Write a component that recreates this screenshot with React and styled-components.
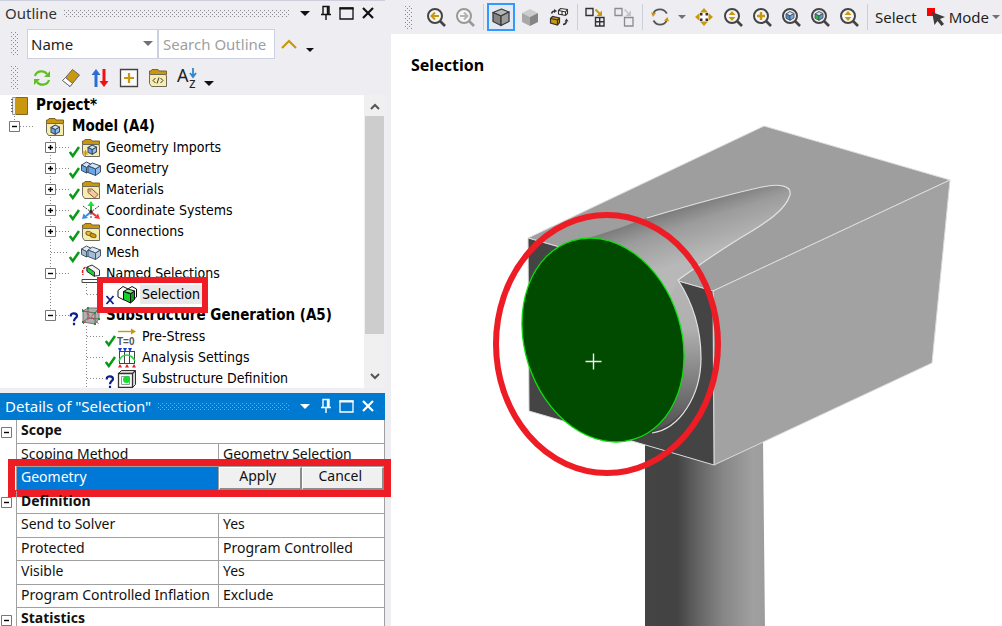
import React from "react";
import styled, { createGlobalStyle, css } from "styled-components";

const sans = `"Noto Sans", "Open Sans", sans-serif`;
const treeFont = `"DejaVu Sans Condensed", "Noto Sans", sans-serif`;
const red = "#ee1c24";

const dots = color => css`
  background-image: conic-gradient(
      from 270deg at 1px 1px,
      ${color} 90deg,
      transparent 0
    ),
    conic-gradient(from 270deg at 1px 1px, ${color} 90deg, transparent 0);
  background-position: 0 0, 2px 2px;
  background-size: 4px 4px;
`;

const GlobalStyle = createGlobalStyle`
  * {
    box-sizing: border-box;
  }
  body {
    margin: 0;
    background-color: #eeeef2;
    color: #1e1e1e;
    font-family: ${sans};
    font-size: 15px;
  }
  button, input, select {
    font: inherit;
    color: inherit;
  }
`;

const Workbench = styled.div`
  display: flex;
  gap: 6px;
  height: 100vh;
  overflow: hidden;
`;

const Sidebar = styled.div`
  position: relative;
  z-index: 1;
  flex: none;
  width: 385px;
  display: flex;
  flex-direction: column;
`;

const TitleBar = styled.header`
  display: flex;
  align-items: center;
  flex: none;
  height: 27px;
  padding: 0 7px 2px 5px;
  color: ${props => (props.$active ? "#fff" : "#333")};
  background-color: ${props => (props.$active ? "#0079d1" : "#eeeef2")};
  border-top: 1px solid ${props => (props.$active ? "#0079d1" : "#ccceDB")};
`;

const Title = styled.h2`
  margin: 0;
  font-size: 15px;
  font-weight: 400;
  line-height: 24px;
`;

const TitleDots = styled.span`
  flex: 1;
  height: 7px;
  margin: 0 4px 0 7px;
  ${props => dots(props.$active ? "#62afe6" : "#8a8a8e")}
`;

const WindowButton = styled.button`
  display: flex;
  align-items: center;
  justify-content: center;
  width: 21px;
  height: 22px;
  padding: 0;
  border: 0;
  background: none;
  color: ${props => (props.$active ? "#fff" : "#111")};
`;

const Bar = styled.div`
  display: flex;
  align-items: center;
  flex: none;
  height: ${props => props.$height}px;
  gap: ${props => props.$gap || 0}px;
  padding-left: 11px;
`;

const Grip = styled.span`
  flex: none;
  width: 7px;
  height: 23px;
  margin-right: 9px;
  ${dots("#8a8a8e")}
`;

const SelectBox = styled.div`
  position: relative;
  width: 131px;
`;

const Field = css`
  width: 100%;
  height: 30px;
  border: 1px solid #ccd0e0;
  border-radius: 0;
  background-color: #fff;
  outline: none;
`;

const NameSelect = styled.select`
  ${Field}
  appearance: none;
  padding: 0 3px;
`;

const SelectCaret = styled.span`
  position: absolute;
  right: 5px;
  top: 0;
  height: 30px;
  display: flex;
  align-items: center;
  pointer-events: none;
  color: #717171;
`;

const SearchBox = styled.input`
  ${Field}
  width: 117px;
  padding: 0 4px;
  &::placeholder {
    color: #a0a0a0;
    opacity: 1;
  }
`;

const ToolButton = styled.button`
  display: flex;
  align-items: center;
  justify-content: center;
  flex: none;
  width: 28px;
  height: 28px;
  padding: 0;
  border: ${props => (props.$pressed ? "2px solid #3399ff" : "0")};
  background-color: ${props => (props.$pressed ? "#e4eaf5" : "transparent")};
`;

const MoreButton = styled(ToolButton)`
  width: 14px;
  padding-top: ${props => (props.$low ? 12 : 0)}px;
  color: ${props => (props.$low ? "#111" : "#717171")};
`;

// outline tree

const TreePane = styled.div`
  display: flex;
  flex: none;
  height: 293px;
  margin-bottom: 5px;
  background-color: #fff;
`;

const TreeList = styled.ul`
  flex: 1;
  margin: 0;
  padding: 0 0 0 9px;
  list-style: none;
  overflow: hidden;
  font-family: ${treeFont};
  font-size: 14px;
  color: #000;
`;

const TreeRow = styled.li`
  position: relative;
  z-index: ${props => (props.$marked ? 1 : 0)};
  display: flex;
  align-items: center;
  height: 21px;
  white-space: nowrap;
`;

const Indent = styled.span`
  width: 36px;
  height: 21px;
  flex: none;
  background: ${props =>
    props.$line
      ? "repeating-linear-gradient(#888 0 1px, transparent 1px 3px) 5px 0 / 1px 100% no-repeat"
      : "none"};
`;

const Joint = styled.span`
  display: flex;
  align-items: center;
  flex: none;
  width: 11px;
  height: 21px;
  background: repeating-linear-gradient(#888 0 1px, transparent 1px 3px) 5px 0 /
    1px ${props => (props.$last ? "10px" : "100%")} no-repeat;
`;

const Expander = styled.button`
  display: flex;
  flex: none;
  width: 11px;
  height: 11px;
  padding: 0;
  border: 0;
  background-color: #fff;
`;

const Dash = styled.span`
  flex: none;
  width: ${props => (props.$leaf ? 18 : 13)}px;
  height: 1px;
  margin-left: ${props => (props.$leaf ? -5 : 0)}px;
  background: repeating-linear-gradient(
    90deg,
    #888 0 1px,
    transparent 1px 3px
  );
`;

const Status = styled.span`
  display: flex;
  align-items: flex-end;
  flex: none;
  width: 12px;
  height: 21px;
`;

const NodeIcon = styled.span`
  display: flex;
  flex: none;
  width: 20px;
  height: 20px;
  margin-right: ${props => (props.$top ? 5 : 3)}px;
`;

const Label = styled.span`
  padding: 0 2px;
  line-height: 19px;
  font-size: ${props => (props.$bold ? 15 : 14)}px;
  font-weight: ${props => (props.$bold ? 700 : 400)};
  background-color: ${props => (props.$selected ? "#e9e9e9" : "transparent")};
`;

const NodeMark = styled.span`
  position: absolute;
  left: 88px;
  top: -7px;
  width: 111px;
  height: 36px;
  border: 6px solid ${red};
  pointer-events: none;
`;

const ScrollTrack = styled.div`
  display: flex;
  flex-direction: column;
  align-items: center;
  width: 21px;
  padding: 8px 0;
  color: #555;
  background-color: #f0f0f0;
`;

const ScrollThumb = styled.div`
  width: 19px;
  height: 218px;
  margin: 6px 0 auto;
  background-color: #cdcdcd;
`;

// details grid

const DetailsPane = styled.div`
  flex: 1;
  background-color: #fff;
`;

const DetailsTable = styled.table`
  width: 100%;
  table-layout: fixed;
  border-collapse: separate;
  border-spacing: 0;
  border-right: 1px solid #a0a0a0;
  font-size: 14px;
  line-height: 18px;
  color: #111;
`;

const GutterCol = styled.col`
  width: 16px;
`;

const NameCol = styled.col`
  width: 202px;
`;

const DetailsRow = styled.tr`
  position: relative;
  height: 24px;
  &:nth-child(even) {
    height: 23px;
  }
`;

const Gutter = styled.td`
  padding: 0 0 0 1px;
  vertical-align: middle;
`;

const Cell = styled.td`
  padding: 0 0 3px 4px;
  border-left: 1px solid #a0a0a0;
  border-bottom: 1px solid #a0a0a0;
  text-align: left;
  font-weight: 400;
  white-space: nowrap;
  color: ${props => (props.$active ? "#fff" : "inherit")};
  background-color: ${props => (props.$active ? "#0078d7" : "transparent")};
`;

const GroupCell = styled(Cell)`
  font-weight: 700;
`;

const ButtonCell = styled(Cell)`
  padding: 0;
`;

const ButtonPair = styled.div`
  display: flex;
  height: 23px;
`;

const PushButton = styled.button`
  flex: 1;
  padding: 0 4px 4px 0;
  border: 1px solid #fff;
  border-right: 2px solid #8c8c8c;
  border-bottom: 2px solid #8c8c8c;
  line-height: 16px;
  background-color: #f0f0f0;
`;

const RowMark = styled.span`
  position: absolute;
  left: 8px;
  top: -8px;
  width: 383px;
  height: 38px;
  border: 7px solid ${red};
  pointer-events: none;
`;

// graphics window

const Graphics = styled.main`
  flex: 1;
  min-width: 0;
  display: flex;
  flex-direction: column;
  background-color: #fff;
`;

const GraphicsBar = styled.div`
  display: flex;
  align-items: center;
  gap: 1px;
  flex: none;
  height: 34px;
  padding-left: 14px;
  overflow: hidden;
  background-color: #eeeef2;
`;

const Divider = styled.span`
  flex: none;
  width: 1px;
  height: 26px;
  margin: 0 2px 0 3px;
  background-color: #ccceDB;
`;

const TextButton = styled.button`
  display: flex;
  align-items: center;
  flex: none;
  gap: 3px;
  padding: 0 4px;
  border: 0;
  background: none;
`;

const ViewTitle = styled.h1`
  margin: 0;
  padding: 20px 20px 22px;
  font-size: 16px;
  line-height: 22px;
  color: #000;
`;

const Scene = styled.svg`
  flex: 1;
  min-height: 0;
  width: 100%;
`;

// small glyphs

const Caret = () => (
  <svg width="10" height="5" viewBox="0 0 10 5">
    <path d="M0 0h10L5 5z" fill="currentColor" />
  </svg>
);

const SmallCaret = ({ color = "currentColor" }) => (
  <svg width="8" height="4" viewBox="0 0 8 4">
    <path d="M0 0h8L4 4z" fill={color} />
  </svg>
);

const Pin = () => (
  <svg width="12" height="16" viewBox="0 0 12 16" fill="none" stroke="currentColor">
    <path d="M3 9V1.5h6V9M1 9.5h10M6 10v5" strokeWidth="1.4" />
    <path d="M7.8 2v7" strokeWidth="2" />
  </svg>
);

const Maximize = () => (
  <svg width="15" height="13" viewBox="0 0 15 13" fill="none" stroke="currentColor">
    <path d="M1 1v11h13V1z" strokeWidth="1.3" />
    <path d="M.5 1.5h14" strokeWidth="2" />
  </svg>
);

const Close = () => (
  <svg width="12" height="12" viewBox="0 0 12 12" stroke="currentColor" strokeWidth="2.2">
    <path d="M1 1l10 10M11 1L1 11" />
  </svg>
);

const Box = ({ open }) => (
  <svg width="11" height="11" viewBox="0 0 11 11" fill="#fff" stroke="#777">
    <path d="M.5.5h10v10H.5z" />
    <path d={open ? "M3 5.5h5" : "M3 5.5h5M5.5 3v5"} stroke="#000" strokeWidth="1.4" />
  </svg>
);

const Chevron = ({ down }) => (
  <svg width="10" height="7" viewBox="0 0 10 7" fill="none" stroke="currentColor" strokeWidth="2">
    <path d={down ? "M1 1l4 4 4-4" : "M1 6l4-4 4 4"} />
  </svg>
);

const statusGlyphs = {
  check: (
    <svg width="12" height="14" viewBox="0 0 12 14" fill="none">
      <path d="M.8 8l3 4L10 3" stroke="#0a9a17" strokeWidth="2.5" />
    </svg>
  ),
  cross: (
    <svg width="12" height="14" viewBox="0 0 12 14" fill="none">
      <path d="M1.5 5l7 8M8.5 5l-7 8" stroke="#0b1f8c" strokeWidth="1.8" />
    </svg>
  ),
  question: (
    <svg width="12" height="16" viewBox="0 0 12 16" fill="none">
      <path
        d="M1.800 6.500V5.500C1.800 2.500 8 2.500 8 6c0 2-3 2-3 5.200M5 12.800v2.400"
        stroke="#0b1f8c"
        strokeWidth="2.200"
      />
    </svg>
  )
};

// tree icons

const Folder = ({ children }) => (
  <svg width="20" height="20" viewBox="0 0 20 20">
    <path d="M1.5 6.5V3H3l1-1.500h6L11 3h7.500v3.500z" fill="#c9980f" stroke="#7a6426" />
    <path d="M1.500 6.500h15.500l1.500 1v11H3.500l-2-3z" fill="#f7edae" stroke="#6d6a5c" />
    {children}
  </svg>
);

const Cube = ({ x, y, s, top, left, right, stroke }) => (
  <g transform={`translate(${x} ${y}) scale(${s})`} stroke={stroke} strokeWidth={1 / s} strokeLinejoin="round">
    <path d="M0 3l5-3 5 2.500-5 3z" fill={top} />
    <path d="M0 3l5 2.500V11L0 8.500z" fill={left} />
    <path d="M5 5.500l5-3V8l-5 3z" fill={right} />
  </g>
);

const blue = { top: "#cfe4f9", left: "#6aa5e6", right: "#8dbdf0", stroke: "#3c4c63" };
const pale = { top: "#dfeaf5", left: "#9fbcdc", right: "#b4cce6", stroke: "#4b5560" };

const Blocks = ({ tone }) => (
  <svg width="20" height="20" viewBox="0 0 20 20">
    <Cube x={0.5} y={3} s={1} {...tone} />
    <path d="M7 7l4.500-3 8 3-5 3z" fill={tone.top} stroke={tone.stroke} />
    <path d="M7 7l7.500 3v6.500L7 13.500z" fill={tone.left} stroke={tone.stroke} />
    <path d="M14.500 10l5-3v6l-5 3.500z" fill={tone.right} stroke={tone.stroke} />
  </svg>
);

const nodeIcons = {
  project: (
    <svg width="20" height="20" viewBox="0 0 20 20">
      <path d="M6.500 1.500h12v17h-12z" fill="#c9980f" stroke="#7d6628" />
      <path d="M3.500 1.500h3v17h-3z" fill="#eee" stroke="#999" />
      <path d="M2 3.500h2M2 6.500h2M2 9.500h2M2 12.500h2M2 15.500h2" stroke="#666" />
    </svg>
  ),
  model: (
    <Folder>
      <Cube x={6} y={8} s={0.85} {...blue} />
    </Folder>
  ),
  imports: (
    <Folder>
      <Cube x={7} y={7} s={0.85} {...blue} />
      <path d="M4.500 12v6M1.500 15h6M2.500 13l4 4M6.500 13l-4 4" stroke="#c9980f" />
    </Folder>
  ),
  geometry: <Blocks tone={blue} />,
  materials: (
    <Folder>
      <path d="M7 9h4l6 5.500-3.500 3.500L7 12.500z" fill="#f6c9a2" stroke="#8b5d3c" />
      <circle cx="9" cy="11" r="0.8" fill="#8b5d3c" />
    </Folder>
  ),
  axes: (
    <svg width="20" height="20" viewBox="0 0 20 20">
      <path d="M10 11V5" stroke="#16c416" strokeWidth="2" />
      <path d="M10 0l3.500 5h-7z" fill="#16e03a" />
      <path d="M10 11l-5 4" stroke="#3d8be0" strokeWidth="2" />
      <path d="M1 18l1.500-5.500L7 17z" fill="#3d8be0" />
      <path d="M10 11l5 4" stroke="#e33" strokeWidth="2" />
      <path d="M19 18l-6-1 4-4.500z" fill="#f33" />
      <path d="M2 5l6 4.500M18 5l-6 4.500M10 12v6" stroke="#444" strokeDasharray="2 1" />
      <circle cx="10" cy="10.500" r="1.8" fill="#333" />
    </svg>
  ),
  connections: (
    <Folder>
      <ellipse cx="8" cy="11.500" rx="3.2" ry="2" fill="#e5b93a" stroke="#7a6426" transform="rotate(20 8 11.500)" />
      <ellipse cx="12" cy="13.500" rx="3.2" ry="2" fill="#c9980f" stroke="#7a6426" transform="rotate(20 12 13.500)" />
    </Folder>
  ),
  mesh: <Blocks tone={pale} />,
  named: (
    <svg width="20" height="20" viewBox="0 0 20 20">
      <path d="M6 3l5-2 7.500 5v5.500l-5 .5L6 7z" fill="#f4f4f4" stroke="#333" />
      <path d="M6 3l7.500 5v4.500L6 7.500z" fill="#16d12e" stroke="#333" />
      <path d="M4.500 3C1.500 5 1 8 2 11" fill="none" stroke="#e02020" strokeWidth="1.500" strokeDasharray="3 1" />
      <path d="M1 15.500h16v3H1z" fill="#fff" stroke="#444" />
      <path d="M17.500 15.500l2-2" fill="none" stroke="#c9980f" />
    </svg>
  ),
  selection: (
    <svg width="20" height="20" viewBox="0 0 20 20" strokeLinejoin="round" stroke="#111">
      <path d="M1 5.500l5-4 5 2.500v8l-4 3-6-3z" fill="#fff" />
      <path d="M11 4l4-2.500 4.500 2.500v8L14 16.500" fill="#fff" />
      <path d="M6.500 6.500L11 4l6.500 2-3.500 2.500z" fill="#7df28a" />
      <path d="M6.500 6.500L13.500 9v9l-7-3.500z" fill="#12d22c" />
      <path d="M13.500 9l4-3v8.500l-4 3.500z" fill="#0c9d20" />
    </svg>
  ),
  substructure: (
    <svg width="20" height="20" viewBox="0 0 20 20">
      <path d="M2 5l5-3h11v11l-4 5-12-2z" fill="#b0b0b0" stroke="#777" />
      <path d="M2 5l12 2v11M14 7l4-5M7 2v10l11 1M7 12l-5 4" fill="none" stroke="#666" />
      <path d="M1 3l17 15M18 3L2 18" stroke="#d04040" strokeDasharray="4 2" />
      <path d="M1 4h2v2H1zM6 1h2v2H6zM17 1h2v2h-2zM13 6h2v2h-2zM1 15h2v2H1zM13 17h2v2h-2zM17 12h2v2h-2z" fill="#2a8a3a" />
    </svg>
  ),
  prestress: (
    <svg width="20" height="20" viewBox="0 0 20 20">
      <path d="M1 4.500h13" stroke="#c9980f" strokeWidth="1.400" />
      <path d="M14 1.500l5 3-5 3z" fill="#c9980f" />
      <text x="0" y="18" fontSize="10" fontWeight="700" fontFamily="Liberation Sans, sans-serif" fill="#555">
        T=0
      </text>
    </svg>
  ),
  analysis: (
    <svg width="20" height="20" viewBox="0 0 20 20" fill="none">
      <path d="M2.500 3v13M7.500 3v13M12.500 3v13M17.500 3v13M2 3.500h16M2 15.500h16" stroke="#444" />
      <path d="M2 13c3-8 12-8 16 0" stroke="#19dc3a" strokeWidth="1.600" />
      <path d="M1 0h4L3 4zM6 0h4L8 4zM11 0h4l-2 4z" fill="#1a35d8" />
      <path d="M1 19.500l2-3.500 2 3.500zM8 19.500l2-3.500 2 3.500zM15 19.500l2-3.500 2 3.500z" fill="#e02020" />
    </svg>
  ),
  definition: (
    <svg width="20" height="20" viewBox="0 0 20 20" fill="#fff" stroke="#333">
      <path d="M1.500 4.500l3-3h14v14l-3 3h-14z" fill="#ddd" />
      <path d="M1.500 4.500h14v14h-14zM15.500 4.500l3-3" strokeWidth="1.300" />
      <path d="M4.500 7.500h8v8h-8z" stroke="#999" />
      <circle cx="9.500" cy="10.500" r="3.5" fill="#12e02c" stroke="none" />
    </svg>
  )
};

const nodes = [
  { label: "Project*", icon: "project", level: 0, bold: true },
  { label: "Model (A4)", icon: "model", level: 1, open: true, bold: true, last: true },
  { label: "Geometry Imports", icon: "imports", level: 2, open: false, status: "check" },
  { label: "Geometry", icon: "geometry", level: 2, open: false, status: "check" },
  { label: "Materials", icon: "materials", level: 2, open: false, status: "check" },
  { label: "Coordinate Systems", icon: "axes", level: 2, open: false, status: "check" },
  { label: "Connections", icon: "connections", level: 2, open: false, status: "check" },
  { label: "Mesh", icon: "mesh", level: 2, status: "check" },
  { label: "Named Selections", icon: "named", level: 2, open: true },
  { label: "Selection", icon: "selection", level: 3, status: "cross", selected: true, line: true, last: true },
  { label: "Substructure Generation (A5)", icon: "substructure", level: 2, open: true, status: "question", bold: true, last: true },
  { label: "Pre-Stress", icon: "prestress", level: 3, status: "check" },
  { label: "Analysis Settings", icon: "analysis", level: 3, status: "check" },
  { label: "Substructure Definition", icon: "definition", level: 3, status: "question" }
];

const TreeNode = ({ node }) => {
  const leaf = node.open === undefined;
  return (
    <TreeRow $marked={node.selected}>
      {node.level > 1 && <Indent />}
      {node.level > 2 && <Indent $line={node.line} />}
      {node.level > 0 && (
        <>
          <Joint $last={node.last}>
            {!leaf && (
              <Expander aria-label={`Toggle ${node.label}`}>
                <Box open={node.open} />
              </Expander>
            )}
          </Joint>
          <Dash $leaf={leaf} />
          <Status>{statusGlyphs[node.status]}</Status>
        </>
      )}
      <NodeIcon $top={node.level < 2}>{nodeIcons[node.icon]}</NodeIcon>
      <Label $bold={node.bold} $selected={node.selected}>
        {node.label}
      </Label>
      {node.selected && <NodeMark />}
    </TreeRow>
  );
};

const TitleButtons = ({ active }) => (
  <>
    <WindowButton $active={active} aria-label="Menu">
      <Caret />
    </WindowButton>
    <WindowButton $active={active} aria-label="Pin">
      <Pin />
    </WindowButton>
    <WindowButton $active={active} aria-label="Maximize">
      <Maximize />
    </WindowButton>
    <WindowButton $active={active} aria-label="Close">
      <Close />
    </WindowButton>
  </>
);

// toolbar icons

const outlineTools = {
  Refresh: (
    <svg width="20" height="20" viewBox="0 0 20 20" fill="none" stroke="#5fbf22" strokeWidth="2.200">
      <path d="M3 8C4.500 2.500 12 2 15 6M17 12c-1.500 5.500-9 6-12 2" />
      <path d="M18 3v6h-6zM2 17v-6h6z" fill="#5fbf22" stroke="none" />
    </svg>
  ),
  Clear: (
    <svg width="20" height="20" viewBox="0 0 20 20" stroke="#666">
      <path d="M11.500 1.500l7 5.500L9 18.500l-7-6z" fill="#c9980f" />
      <path d="M4.500 9.500l7 6L9 18.500l-7.500-6z" fill="#fff" />
    </svg>
  ),
  Sort: (
    <svg width="20" height="20" viewBox="0 0 20 20">
      <path d="M6 19V5" stroke="#2a6fd0" strokeWidth="3" />
      <path d="M1.500 7L6 1l4.500 6z" fill="#2a6fd0" />
      <path d="M14 1v14" stroke="#f01010" strokeWidth="3" />
      <path d="M9.500 13l4.500 6 4.500-6z" fill="#f01010" />
    </svg>
  ),
  Expand: (
    <svg width="20" height="20" viewBox="0 0 20 20">
      <path d="M1.500 1.500h17v17h-17z" fill="#fbfbfb" stroke="#444" strokeWidth="1.300" />
      <path d="M10 5v10M5 10h10" stroke="#c9980f" strokeWidth="2.200" />
    </svg>
  ),
  Tags: (
    <Folder>
      <path d="M7.500 10L5 12.500 7.500 15M12.500 10l2.500 2.500-2.500 2.500M11 9.500l-2 6" fill="none" stroke="#333" />
    </Folder>
  ),
  Alphabetical: (
    <svg width="26" height="28" viewBox="0 0 26 28" fontFamily="Noto Sans, sans-serif" fill="#222">
      <text x="3" y="18" fontSize="18">
        A
      </text>
      <text x="15" y="24" fontSize="14">
        z
      </text>
      <path d="M19 4v8M16 9l3 4 3-4" stroke="#2f86cc" strokeWidth="1.800" fill="none" />
    </svg>
  )
};

const Lens = ({ color = "#444", children }) => (
  <svg width="20" height="20" viewBox="0 0 20 20">
    <circle cx="9" cy="9" r="7" fill="#f6f6f6" stroke={color} strokeWidth="2" />
    <path d="M14 14l5 5" stroke={color} strokeWidth="2.600" />
    {children}
  </svg>
);

const UpDown = () => <path d="M9 4l3.500 4h-7zM9 14l3.500-4h-7z" fill="#c9980f" />;

const viewTools = [
  {
    name: "Previous view",
    icon: (
      <Lens>
        <path d="M13 9H6M9 5.500L5.500 9 9 12.500" fill="none" stroke="#c9980f" strokeWidth="2" />
      </Lens>
    )
  },
  {
    name: "Next view",
    icon: (
      <Lens color="#999">
        <path d="M5 9h7M9 5.500l3.500 3.500L9 12.500" fill="none" stroke="#b4b4b4" strokeWidth="2" />
      </Lens>
    )
  },
  { divider: true },
  {
    name: "Shaded with edges",
    pressed: true,
    icon: (
      <svg width="20" height="20" viewBox="0 0 20 20">
        <g stroke="#3a3a3a" strokeWidth="1.300" strokeLinejoin="round">
          <path d="M2 5.500L10.500 2 18 5l-8 4z" fill="#b5b5b5" />
          <path d="M2 5.500L10 9v9.500l-8-4z" fill="#858585" />
          <path d="M18 5l-8 4v9.500l8-4z" fill="#9c9c9c" />
        </g>
      </svg>
    )
  },
  {
    name: "Shaded",
    icon: (
      <svg width="20" height="20" viewBox="0 0 20 20">
        <path d="M2 6l8-4 8 4-8 4z" fill="#ccc" />
        <path d="M2 6l8 4v9l-8-4z" fill="#a8a8a8" />
        <path d="M18 6l-8 4v9l8-4z" fill="#858585" />
      </svg>
    )
  },
  {
    name: "Swap bodies",
    icon: (
      <svg width="20" height="20" viewBox="0 0 20 20">
        <path d="M9.500 3.500l2-2 7 1v4l-2 2-7-1.500zM9.500 3.500l7 1.500v3.500M16.500 5l2-2.500M13 4.200v3.600" fill="#fff" stroke="#333" strokeWidth="1.100" />
        <path d="M1.500 11.500l2-2 7 1.500v4.500l-2 2.500-7-2zM1.500 11.500l7 1.500v5M8.500 13l2-2" fill="#c9980f" stroke="#333" strokeWidth="1.200" />
        <path d="M2.500 6.500C3 5 4 4 6 4M14 17.500c2 0 3-1 3.500-3" fill="none" stroke="#333" strokeWidth="1.500" />
        <path d="M5 2l3 2-3 2zM15.500 14.500h4l-2-3z" fill="#333" />
      </svg>
    )
  },
  { divider: true },
  {
    name: "Expand selection",
    icon: (
      <svg width="20" height="20" viewBox="0 0 20 20" fill="none" stroke="#333" strokeWidth="1.400">
        <path d="M1 1.500h7v7H1zM10.500 10.500h8.500v8.500h-8.500zM14.700 10.500V19M10.500 14.700H19" />
        <path d="M10.500 2.500l4 4" stroke="#c9980f" strokeWidth="2" />
        <path d="M17 3.500V9h-5.500z" fill="#c9980f" stroke="none" />
      </svg>
    )
  },
  {
    name: "Collapse selection",
    icon: (
      <svg width="20" height="20" viewBox="0 0 20 20" fill="none" stroke="#8c8c8c" strokeWidth="1.300">
        <path d="M1 1.500h7v7H1zM10.500 10.500h8.500v8.500h-8.500z" />
        <path d="M10.500 2.500l4 4" stroke="#c4c4c4" strokeWidth="1.600" />
        <path d="M17 3.500V9h-5.500z" fill="#c4c4c4" stroke="none" />
      </svg>
    )
  },
  { divider: true },
  {
    name: "Rotate",
    icon: (
      <svg width="20" height="20" viewBox="0 0 20 20" fill="none" stroke="#555" strokeWidth="1.800">
        <path d="M3.500 6C6 1 14 1 16.800 6.500M16.500 14c-3 5-10 5-13-.5" />
        <path d="M1 5.500l5 .5-3 4zM19 14.500l-5-1 3.500-3.500z" fill="#c9980f" stroke="none" />
      </svg>
    )
  },
  { name: "Rotate options", more: true },
  {
    name: "Pan",
    icon: (
      <svg width="20" height="20" viewBox="0 0 20 20">
        <path d="M10 1l4 4.500H6zM10 19l4-4.500H6zM1 10l4.500-4v8zM19 10l-4.500-4v8z" fill="#c9980f" />
        <path d="M6 6h8v8H6z" fill="#fff" />
        <path d="M6 6h2.500v2.500H6zM11.500 6H14v2.500h-2.500zM6 11.500h2.500V14H6zM11.500 11.500H14V14h-2.500z" fill="#333" />
      </svg>
    )
  },
  { name: "Zoom", icon: <Lens><UpDown /></Lens> },
  {
    name: "Zoom in",
    icon: (
      <Lens>
        <path d="M9 5v8M5 9h8" stroke="#c9980f" strokeWidth="2.400" />
      </Lens>
    )
  },
  {
    name: "Zoom to fit",
    icon: (
      <Lens>
        <Cube x={5} y={4.5} s={0.8} top="#d4e8fb" left="#5584bd" right="#7ba9dd" stroke="#4a5a70" />
      </Lens>
    )
  },
  {
    name: "Zoom to selection",
    icon: (
      <Lens>
        <Cube x={5} y={4.5} s={0.8} top="#c9dcf0" left="#14c630" right="#6c94bf" stroke="#4a5a60" />
      </Lens>
    )
  },
  { name: "Box zoom", icon: <Lens><UpDown /></Lens> },
  { divider: true }
];

const ModeIcon = () => (
  <svg width="20" height="20" viewBox="0 0 20 20">
    <path d="M1 1h8v8H1z" fill="#f00" />
    <path d="M6 5l13 5-5 2 4 5-2.500 2-4-5-3 4z" fill="#3d3d3d" />
  </svg>
);

const ViewTool = ({ tool }) => {
  if (tool.divider) {
    return <Divider />;
  }
  if (tool.more) {
    return (
      <MoreButton aria-label={tool.name}>
        <SmallCaret />
      </MoreButton>
    );
  }
  return (
    <ToolButton $pressed={tool.pressed} aria-label={tool.name}>
      {tool.icon}
    </ToolButton>
  );
};

const details = [
  { group: "Scope" },
  { name: "Scoping Method", value: "Geometry Selection" },
  { name: "Geometry", editing: true },
  { group: "Definition" },
  { name: "Send to Solver", value: "Yes" },
  { name: "Protected", value: "Program Controlled" },
  { name: "Visible", value: "Yes" },
  { name: "Program Controlled Inflation", value: "Exclude" },
  { group: "Statistics" }
];

const Detail = ({ row }) => {
  if (row.group) {
    return (
      <DetailsRow>
        <Gutter>
          <Expander aria-label={`Toggle ${row.group}`}>
            <Box open />
          </Expander>
        </Gutter>
        <GroupCell as="th" colSpan={2}>
          {row.group}
        </GroupCell>
      </DetailsRow>
    );
  }
  return (
    <DetailsRow>
      <Gutter>{row.editing && <RowMark />}</Gutter>
      <Cell as="th" scope="row" $active={row.editing}>
        {row.name}
      </Cell>
      {row.editing ? (
        <ButtonCell>
          <ButtonPair>
            <PushButton>Apply</PushButton>
            <PushButton>Cancel</PushButton>
          </ButtonPair>
        </ButtonCell>
      ) : (
        <Cell>{row.value}</Cell>
      )}
    </DetailsRow>
  );
};

const NacelleScene = () => (
  <Scene viewBox="391 98 611 528" preserveAspectRatio="xMinYMin slice">
    <defs>
      <linearGradient id="post">
        <stop offset="0" stopColor="#444" />
        <stop offset="0.27" stopColor="#434343" />
        <stop offset="0.42" stopColor="#606060" />
        <stop offset="0.65" stopColor="#868686" />
        <stop offset="0.9" stopColor="#a0a0a0" />
        <stop offset="1" stopColor="#9c9c9c" />
      </linearGradient>
      <linearGradient id="hub" gradientUnits="userSpaceOnUse" x1="690" y1="200" x2="708" y2="255">
        <stop offset="0" stopColor="#747474" />
        <stop offset="0.4" stopColor="#9c9c9c" />
        <stop offset="1" stopColor="#b8b8b8" />
      </linearGradient>
      <linearGradient id="rim" gradientUnits="userSpaceOnUse" x1="0" y1="270" x2="0" y2="435">
        <stop offset="0" stopColor="#b6b6b6" />
        <stop offset="0.35" stopColor="#b0b0b0" />
        <stop offset="1" stopColor="#4c4c4c" />
      </linearGradient>
    </defs>
    <path d="M645 440h118l2 190H645z" fill="url(#post)" />
    <g stroke="#dcdcdc" strokeLinejoin="round">
      <path d="M528 238L764 126l186 54-237 111z" fill="#9e9e9e" />
      <path d="M713 291l237-111-18 183-218 102z" fill="#a2a2a2" />
      <path d="M528 238l185 53 1 174-185-54z" fill="#444" />
    </g>
    <path
      d="M645 432C680 428 701 395 701 358c0-30-8-55-23-78L640 250 600 300v130z"
      fill="url(#rim)"
    />
    <path
      d="M585 239C610 232 630 224 647 218c40-12 83-24 115-31 18-4 30-1 28 8-5 16-25 28-43 39-22 13-48 31-69 46l-20 40-60-60z"
      fill="url(#hub)"
    />
    <path
      d="M647 218c40-12 83-24 115-31 18-4 30-1 28 8-5 16-25 28-43 39-22 13-48 31-69 46 15 23 23 48 23 78 0 37-21 71-49 75"
      fill="none"
      stroke="#e2e2e2"
      strokeWidth="1.2"
    />
    <ellipse cx="603" cy="340" rx="104" ry="78.4" transform="rotate(72.6 603 340)" fill="#004b00" stroke="#0be00b" strokeWidth="1.3" />
    <path d="M585.5 361.5h16M593.5 353.5v16" stroke="#eee" strokeWidth="1.4" />
    <ellipse cx="607" cy="344" rx="111" ry="129" fill="none" stroke={red} strokeWidth="6" />
  </Scene>
);

export default function App() {
  return (
    <Workbench>
      <GlobalStyle />
      <Sidebar>
        <TitleBar>
          <Title>Outline</Title>
          <TitleDots />
          <TitleButtons />
        </TitleBar>
        <Bar $height={33}>
          <Grip />
          <SelectBox>
            <NameSelect aria-label="Filter by" defaultValue="Name">
              <option>Name</option>
            </NameSelect>
            <SelectCaret>
              <Caret />
            </SelectCaret>
          </SelectBox>
          <SearchBox aria-label="Search Outline" placeholder="Search Outline" />
          <ToolButton aria-label="Collapse search">
            <svg width="16" height="10" viewBox="0 0 16 10" fill="none">
              <path d="M1 9l7-7 7 7" stroke="#c9980f" strokeWidth="2.2" />
            </svg>
          </ToolButton>
          <MoreButton $low aria-label="Search options">
            <SmallCaret />
          </MoreButton>
        </Bar>
        <Bar $height={35} $gap={1}>
          <Grip />
          {Object.keys(outlineTools).map(name => (
            <ToolButton key={name} aria-label={name}>
              {outlineTools[name]}
            </ToolButton>
          ))}
          <MoreButton $low aria-label="More tools">
            <Caret />
          </MoreButton>
        </Bar>
        <TreePane>
          <TreeList>
            {nodes.map(node => (
              <TreeNode key={node.label} node={node} />
            ))}
          </TreeList>
          <ScrollTrack>
            <Chevron />
            <ScrollThumb />
            <Chevron down />
          </ScrollTrack>
        </TreePane>
        <TitleBar $active>
          <Title>Details of "Selection"</Title>
          <TitleDots $active />
          <TitleButtons active />
        </TitleBar>
        <DetailsPane>
          <DetailsTable>
            <colgroup>
              <GutterCol />
              <NameCol />
              <col />
            </colgroup>
            <tbody>
              {details.map(row => (
                <Detail key={row.group || row.name} row={row} />
              ))}
            </tbody>
          </DetailsTable>
        </DetailsPane>
      </Sidebar>
      <Graphics>
        <GraphicsBar>
          <Grip />
          {viewTools.map((tool, i) => (
            <ViewTool key={i} tool={tool} />
          ))}
          <TextButton>Select</TextButton>
          <TextButton>
            <ModeIcon />
            Mode
            <SmallCaret color="#717171" />
          </TextButton>
        </GraphicsBar>
        <ViewTitle>Selection</ViewTitle>
        <NacelleScene />
      </Graphics>
    </Workbench>
  );
}
